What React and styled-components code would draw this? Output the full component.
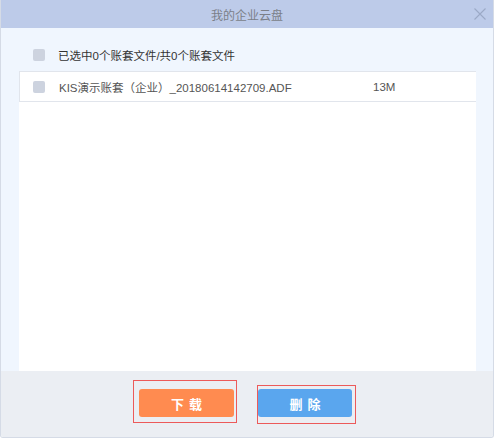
import styled, { createGlobalStyle } from 'styled-components'

const GlobalStyle = createGlobalStyle`
  html, body {
    margin: 0;
    padding: 0;
    background: #ffffff;
  }
  body {
    font-family: 'Liberation Sans', 'Noto Sans CJK SC', sans-serif;
  }
`

const Dialog = styled.div`
  width: 494px;
  height: 438px;
  box-sizing: border-box;
  display: flex;
  flex-direction: column;
  border: 1px solid #d5dbe6;
  border-top: none;
  border-radius: 0 0 3px 3px;
  overflow: hidden;
`

const Header = styled.div`
  height: 28px;
  flex: none;
  display: flex;
  align-items: center;
  justify-content: center;
  position: relative;
  background: #bdcbe9;
  color: #7b7f88;
  font-size: 12px;
`

const Close = styled.button`
  position: absolute;
  right: 7px;
  top: 8px;
  width: 12px;
  height: 12px;
  padding: 0;
  border: none;
  background: none;
  display: flex;
  cursor: pointer;
`

const Body = styled.div`
  flex: 1;
  display: flex;
  flex-direction: column;
  background: #f0f6fe;
  padding: 0 17px 0 18px;
`

const SelectAll = styled.label`
  height: 33px;
  padding-top: 10px;
  display: flex;
  align-items: center;
  gap: 13px;
  padding-left: 14px;
  color: #333333;
  font-size: 11.5px;
`

const Check = styled.span`
  width: 12px;
  height: 12px;
  flex: none;
  border-radius: 2px;
  background: #cdd3df;
`

const List = styled.div`
  flex: 1;
  background: #ffffff;
`

const Row = styled.div`
  height: 29px;
  display: flex;
  align-items: center;
  padding-left: 13px;
  border: 1px solid #e1e5ec;
  border-right: none;
  color: #555555;
  font-size: 11.5px;
`

const Name = styled.span`
  margin-left: 14px;
  width: 314px;
  white-space: nowrap;
`

const Size = styled.span`
  white-space: nowrap;
`

const Footer = styled.div`
  height: 66px;
  flex: none;
  display: flex;
  justify-content: center;
  align-items: flex-start;
  gap: 20px;
  padding-right: 5px;
  background: #ebeef3;
`

const Highlight = styled.div`
  margin-top: ${p => p.$offset}px;
  padding: ${p => p.$pad};
  border: 1px solid #ec5a5a;
  display: flex;
`

const Button = styled.button`
  width: ${p => p.$width}px;
  height: 28px;
  border: none;
  border-radius: 3px;
  background: ${p => p.$color};
  color: #ffffff;
  font-family: 'Liberation Sans', 'Noto Sans CJK SC', sans-serif;
  font-size: 13px;
  font-weight: 700;
  letter-spacing: 5px;
  text-indent: 5px;
  cursor: pointer;
`

export default function App() {
  return (
    <>
      <GlobalStyle />
      <Dialog>
        <Header>
          我的企业云盘
          <Close aria-label="关闭">
            <svg width="12" height="12" viewBox="0 0 12 12">
              <path d="M0.5 0.5 L11.5 11.5 M11.5 0.5 L0.5 11.5" stroke="#9ba9c6" strokeWidth="1.1" />
            </svg>
          </Close>
        </Header>
        <Body>
          <SelectAll>
            <Check />
            已选中0个账套文件/共0个账套文件
          </SelectAll>
          <List>
            <Row>
              <Check />
              <Name>KIS演示账套（企业）_20180614142709.ADF</Name>
              <Size>13M</Size>
            </Row>
          </List>
        </Body>
        <Footer>
          <Highlight $offset={9} $pad="8px 2px 5px 5px">
            <Button $width={95} $color="#ff8b50">下载</Button>
          </Highlight>
          <Highlight $offset={14} $pad="3px 3px 6px 0">
            <Button $width={94} $color="#5aa6ee">删除</Button>
          </Highlight>
        </Footer>
      </Dialog>
    </>
  )
}
